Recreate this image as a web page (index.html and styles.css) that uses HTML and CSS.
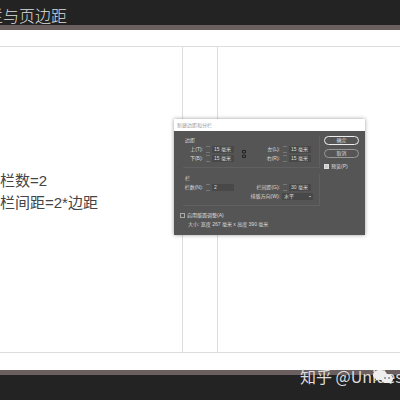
FILE: index.html
```
<!DOCTYPE html>
<html lang="zh-CN">
<head>
<meta charset="utf-8">
<title>栏与页边距</title>
<link rel="stylesheet" href="styles.css">
</head>
<body>
<header class="bar top"><h1>栏与页边距</h1></header>
<main class="canvas">
  <div class="spread"><div class="gutter"></div></div>
  <div class="notes"><p>栏数=2</p><p>栏间距=2*边距</p></div>
  <form class="dialog">
    <h2>新建边距和分栏</h2>
    <div class="body">
      <div class="groups">
        <section class="group">
          <h3>边距</h3>
          <div class="fields">
            <label for="t">上(T):</label><i class="step"></i><input id="t" value="15 毫米">
            <svg class="link" viewBox="0 0 6 10"><path d="M1.5 4V1.5h3V4M1.5 6v2.5h3V6M3 3v4"/></svg>
            <label for="l">左(L):</label><i class="step"></i><input id="l" value="15 毫米">
            <label for="b">下(B):</label><i class="step"></i><input id="b" value="15 毫米">
            <label for="r">右(R):</label><i class="step"></i><input id="r" value="15 毫米">
          </div>
        </section>
        <section class="group">
          <h3>栏</h3>
          <div class="fields">
            <label for="n">栏数(N):</label><i class="step"></i><input id="n" value="2">
            <span></span>
            <label for="g">栏间距(G):</label><i class="step"></i><input id="g" value="30 毫米">
            <label class="wide" for="w">排版方向(W):</label>
            <select id="w"><option>水平</option></select>
          </div>
        </section>
      </div>
      <div class="actions">
        <button type="button" class="primary">确定</button>
        <button type="button">取消</button>
        <label class="check"><input type="checkbox" checked>预览(P)</label>
      </div>
    </div>
    <div class="foot">
      <label class="check"><input type="checkbox">启用版面调整(A)</label>
      <p>大小: 宽度 267 毫米 x 高度 390 毫米</p>
    </div>
  </form>
</main>
<footer class="bar bottom"></footer>
<div class="mark">知乎 @Unidesign
  <svg viewBox="0 0 28 18"><path d="M8 2c4 0 7 2 7 5s-3 5-7 5l-2-.3L3 13l1-2C2 10 1 9 1 7c0-3 3-5 7-5z"/><path d="M15 6c4 0 6 2 6 5 0 1-1 3-2 3l.5 2-2.500-1H15c-4 0-6-2-6-4.500S11 6 15 6z"/><circle cx="13" cy="10" r=".8"/><circle cx="17" cy="10" r=".8"/></svg>
</div>
</body>
</html>
```
FILE: styles.css
```
* { box-sizing: border-box; }
body {
  margin: 0;
  min-height: 100vh;
  display: flex;
  flex-direction: column;
  position: relative;
  overflow: hidden;
  background: #fff;
  font-family: "Noto Sans CJK SC", sans-serif;
}
h1, h2, h3, p { margin: 0; font-weight: 400; }
.bar { height: 30px; background: #232323; }
.top { border-bottom: 5px solid #6b5f60; }
.bottom { border-top: 5px solid #6b5f60; }
h1 {
  margin-left: -13px;
  padding-top: 4px;
  font-size: 16px;
  line-height: 23px;
  font-weight: 300;
  color: #ddd;
}
.canvas {
  flex: 1;
  display: flex;
  position: relative;
  padding: 16px 0 17px;
}
.spread {
  flex: 1;
  display: flex;
  border: solid #ddd;
  border-width: 1px 0;
}
.gutter {
  width: 36px;
  margin-left: 45.5%;
  border: solid #ddd;
  border-width: 0 1px;
}
.notes {
  position: absolute;
  left: 0;
  top: 140px;
  font-family: "Liberation Sans", "Noto Sans CJK SC", sans-serif;
  font-size: 15px;
  line-height: 22px;
  font-weight: 300;
  color: #444;
}
.dialog {
  position: absolute;
  left: 174px;
  top: 89px;
  width: 191px;
  height: 116px;
  background: #555;
  color: #ddd;
  font-family: "Liberation Sans", "Noto Sans CJK SC", sans-serif;
  font-size: 5px;
  line-height: 9px;
  box-shadow: 0 0 4px #0006;
}
h2 {
  height: 12px;
  padding-left: 3px;
  background: #fff;
  color: #999;
  font-size: 5px;
  line-height: 12px;
}
h3 { font-size: 5px; line-height: 9px; padding-left: 2px; }
.body { display: flex; gap: 4px; padding: 5px 6px 0 9px; }
.groups { flex: 1; display: grid; gap: 6px; }
.group { height: 32px; border: solid #606060; border-width: 0 1px 1px 0; }
.fields {
  display: grid;
  grid-template-columns: 20px 5px 22px 22px 20px 5px 22px;
  column-gap: 2px;
  align-items: center;
}
.fields label { text-align: right; white-space: nowrap; justify-self: end; }
input, select, button {
  margin: 0;
  padding: 0 2px;
  border: 0;
  min-width: 0;
  font: inherit;
  color: #ddd;
  background: #484848;
}
.fields input { width: 22px; height: 7px; line-height: 7px; }
.fields select {
  grid-column: 6 / 8;
  width: 31px;
  height: 7px;
  line-height: 7px;
  appearance: none;
  background: #484848 linear-gradient(#aaa, #aaa) 27px 3px / 2px 1px no-repeat;
}
.fields .wide { grid-column: 1 / 6; }
.step { width: 4px; height: 7px; border: solid #777; border-width: 1px 0; justify-self: center; }
.link { grid-row: 1 / 3; grid-column: 4; width: 6px; height: 10px; margin-right: 6px; justify-self: center; fill: none; stroke: #222; }
.actions { width: 35px; display: flex; flex-direction: column; gap: 4px; }
button { height: 9px; border: 1px solid #999; border-radius: 5px; background: #555; line-height: 7px; }
.primary { border-color: #eee; }
.check { display: flex; align-items: center; gap: 2px; white-space: nowrap; }
.check input { appearance: none; width: 5px; height: 5px; padding: 0; border: 1px solid #aaa; background: #555; }
.check input:checked { background: #ccc; border-color: #ddd; }
.foot { padding: 5px 6px 0; }
.foot p { padding-left: 8px; }
.mark {
  position: absolute;
  left: 300px;
  right: 0;
  bottom: 12px;
  overflow: hidden;
  font-size: 16px;
  line-height: 24px;
  color: #ddd;
  white-space: nowrap;
}
.mark svg { position: absolute; left: 72px; top: 4px; width: 28px; height: 18px; fill: #eee; }
.mark circle { fill: #444; }
```
